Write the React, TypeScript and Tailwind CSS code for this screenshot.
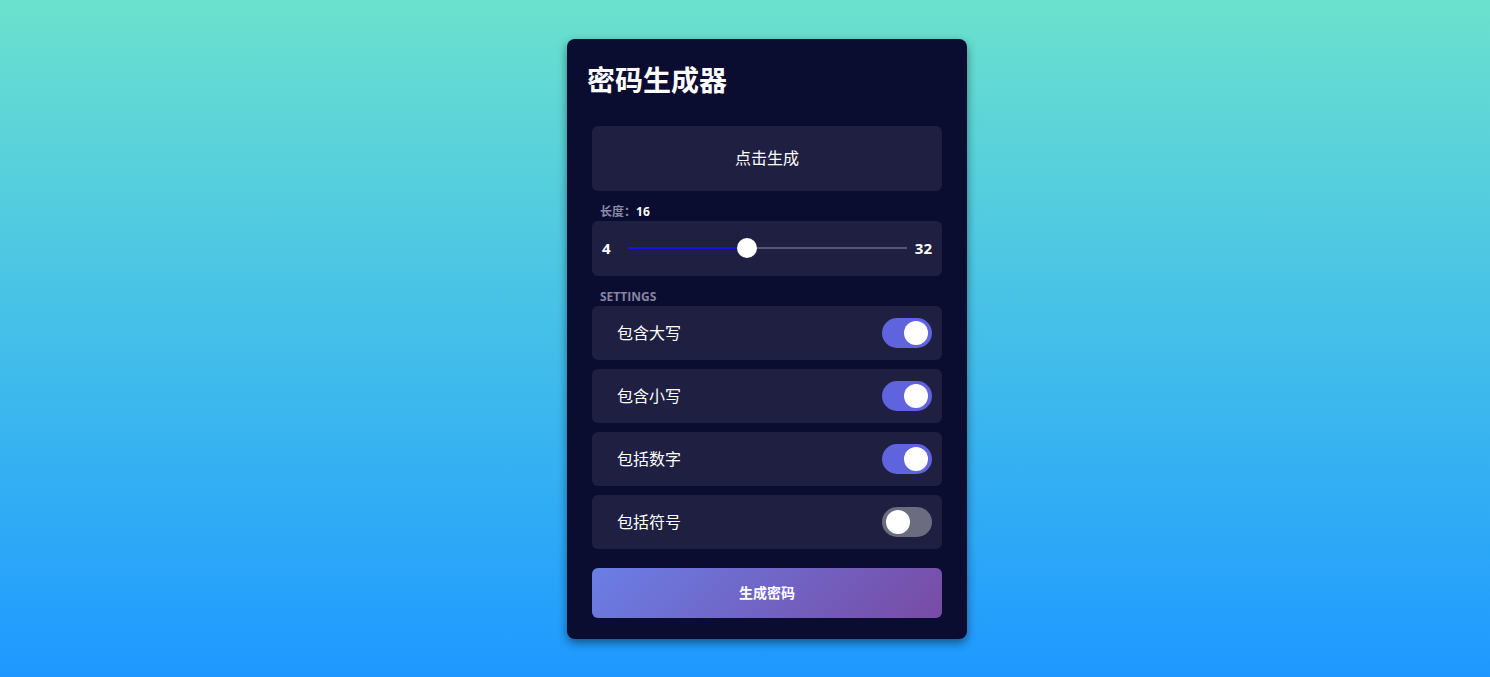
import React, { useState } from "react";

const font = { fontFamily: '"Open Sans", "Noto Sans CJK SC", sans-serif' };

function Toggle({ on, onClick }: { on: boolean; onClick: () => void }) {
  return (
    <button
      onClick={onClick}
      className={`relative w-[50px] h-[30px] rounded-full ${on ? "bg-[#5f63de]" : "bg-[#6b6c80]"}`}
    >
      <span
        className={`absolute top-[3px] w-[24px] h-[24px] rounded-full bg-white ${on ? "right-[4px]" : "left-[4px]"}`}
      />
    </button>
  );
}

export default function App() {
  const [opts, setOpts] = useState([
    { label: "包含大写", on: true },
    { label: "包含小写", on: true },
    { label: "包括数字", on: true },
    { label: "包括符号", on: false },
  ]);
  const len = 16;
  const pct = ((len - 4) / 28) * 100;
  return (
    <div
      className="w-full h-[677px] bg-gradient-to-b from-[#6be1cc] to-[#1e98ff] flex justify-center items-center pl-[44px]"
      style={font}
    >
      <div className="w-[400px] h-[600px] bg-[#0a0c30] rounded-[8px] p-5 shadow-[0_4px_10px_rgba(0,0,0,0.45)] text-white">
        <h1 className="text-[28px] leading-[42px] font-bold">密码生成器</h1>
        <div className="px-[5px] mt-[25px]">
          <div className="h-[65px] rounded-[6px] bg-[#1f2041] flex items-center justify-center text-[16px]">
            点击生成
          </div>
          <div className="mt-[11px] h-[19px] pl-2 text-[12px] leading-[19px] flex items-center">
            <span className="text-[#8a8aa6] font-semibold">长度：</span>
            <span className="font-bold text-white">{len}</span>
          </div>
          <div className="h-[55px] rounded-[6px] bg-[#1f2041] flex items-center pl-[10px] pr-[10px] text-[15px] font-bold">
            <span>4</span>
            <div className="relative flex-1 ml-[17px] mr-[8px] h-[2px] bg-[#55577a]">
              <div className="absolute left-0 top-0 h-[2px] bg-[#1414e6]" style={{ width: `${pct}%` }} />
              <div
                className="absolute top-[-9px] w-[20px] h-[20px] rounded-full bg-white"
                style={{ left: `calc(${pct}% - 10px)` }}
              />
            </div>
            <span>32</span>
          </div>
          <div className="mt-[11px] h-[19px] pl-2 text-[12px] leading-[19px] font-bold text-[#8585a2]">
            SETTINGS
          </div>
          <div className="flex flex-col gap-[9px]">
            {opts.map((o, i) => (
              <div
                key={o.label}
                className="h-[54px] rounded-[6px] bg-[#1f2041] flex items-center justify-between pl-[25px] pr-[10px] text-[16px]"
              >
                <span>{o.label}</span>
                <Toggle
                  on={o.on}
                  onClick={() =>
                    setOpts(opts.map((p, j) => (j === i ? { ...p, on: !p.on } : p)))
                  }
                />
              </div>
            ))}
          </div>
          <button className="mt-[19px] w-full h-[50px] rounded-[6px] bg-[linear-gradient(135deg,#6a7ee6,#784ba4)] text-[14px] font-bold text-white">
            生成密码
          </button>
        </div>
      </div>
    </div>
  );
}
